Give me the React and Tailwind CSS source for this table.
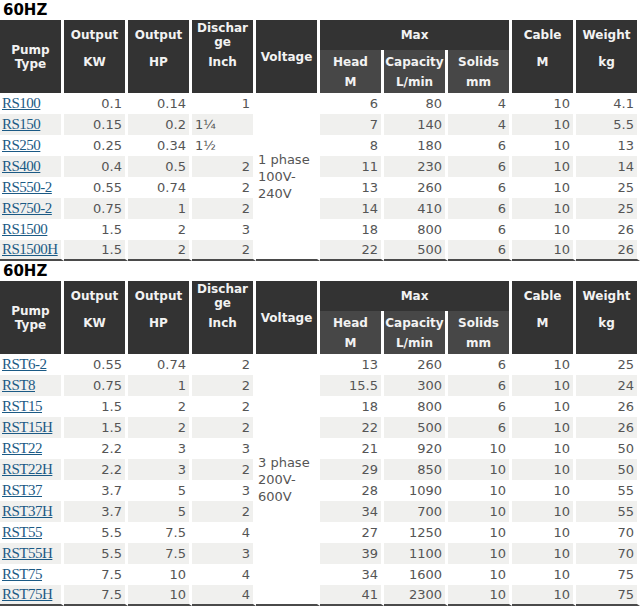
import React from 'react';

const rsRows = [
  ['RS100', '0.1', '0.14', '1', '6', '80', '4', '10', '4.1'],
  ['RS150', '0.15', '0.2', '1¼', '7', '140', '4', '10', '5.5'],
  ['RS250', '0.25', '0.34', '1½', '8', '180', '6', '10', '13'],
  ['RS400', '0.4', '0.5', '2', '11', '230', '6', '10', '14'],
  ['RS550-2', '0.55', '0.74', '2', '13', '260', '6', '10', '25'],
  ['RS750-2', '0.75', '1', '2', '14', '410', '6', '10', '25'],
  ['RS1500', '1.5', '2', '3', '18', '800', '6', '10', '26'],
  ['RS1500H', '1.5', '2', '2', '22', '500', '6', '10', '26'],
];

const rstRows = [
  ['RST6-2', '0.55', '0.74', '2', '13', '260', '6', '10', '25'],
  ['RST8', '0.75', '1', '2', '15.5', '300', '6', '10', '24'],
  ['RST15', '1.5', '2', '2', '18', '800', '6', '10', '26'],
  ['RST15H', '1.5', '2', '2', '22', '500', '6', '10', '26'],
  ['RST22', '2.2', '3', '3', '21', '920', '10', '10', '50'],
  ['RST22H', '2.2', '3', '2', '29', '850', '10', '10', '50'],
  ['RST37', '3.7', '5', '3', '28', '1090', '10', '10', '55'],
  ['RST37H', '3.7', '5', '2', '34', '700', '10', '10', '55'],
  ['RST55', '5.5', '7.5', '4', '27', '1250', '10', '10', '70'],
  ['RST55H', '5.5', '7.5', '3', '39', '1100', '10', '10', '70'],
  ['RST75', '7.5', '10', '4', '34', '1600', '10', '10', '75'],
  ['RST75H', '7.5', '10', '4', '41', '2300', '10', '10', '75'],
];

const th1 = "bg-[#333] border-r-[3px] border-white text-center align-middle p-0 leading-[14px] font-bold";
const th2 = "bg-[#333] border-r-[3px] border-white text-center align-top p-0 pt-[2px] leading-[20px] font-bold";
const thSub = "bg-[#474747] border-r-[3px] border-white text-center align-top p-0 pt-[2px] leading-[20px] font-bold";

const Heading = () => (
  <h2 className="h-[20px] leading-[20px] pl-[3px] text-[15px] font-bold text-black">60HZ</h2>
);

const PumpTable = ({ rows, voltage }) => (
  <table className="border-separate border-spacing-0 table-fixed w-[640px] text-[13px] text-[#555]">
    <colgroup>
      {Array.from({ length: 10 }).map((_, i) => (
        <col key={i} className="w-[64px]" />
      ))}
    </colgroup>
    <thead className="text-[12px] text-[#f2f2f2]">
      <tr className="h-[30px]">
        <th rowSpan={2} className={th1}>Pump<br />Type</th>
        <th className={th1}>Output</th>
        <th className={th1}>Output</th>
        <th className={th1}>Dischar<br />ge</th>
        <th rowSpan={2} className={th1}>Voltage</th>
        <th colSpan={3} className={th1}>Max</th>
        <th className={th1}>Cable</th>
        <th className={th1}>Weight</th>
      </tr>
      <tr className="h-[43px]">
        <th className={th2}>KW</th>
        <th className={th2}>HP</th>
        <th className={th2}>Inch</th>
        <th className={thSub}>Head<br />M</th>
        <th className={thSub}>Capacity<br />L/min</th>
        <th className={thSub}>Solids<br />mm</th>
        <th className={th2}>M</th>
        <th className={th2}>kg</th>
      </tr>
    </thead>
    <tbody>
      {rows.map((r, i) => {
        const last = i === rows.length - 1;
        const bg = i % 2 === 1 ? 'bg-[#f0f0ee]' : 'bg-white';
        const edge = last ? 'border-b-2 border-b-[#4a4a4a]' : '';
        return (
          <tr key={r[0]} className={last ? 'h-[19px]' : 'h-[21px]'}>
            <td className={`${bg} ${edge} border-r-[3px] border-r-white p-0 pl-[2px] leading-[19px] text-left`}>
              <a href="#" className="font-['Liberation_Serif',serif] text-[15px] tracking-[-0.5px] text-[#1b5a85] underline">
                {r[0]}
              </a>
            </td>
            {r.slice(1, 4).map((v, j) => {
              const frac = v.includes('¼') || v.includes('½');
              return (
                <td
                  key={j}
                  className={`${bg} ${edge} border-r-[3px] border-r-white p-0 leading-[19px] ${frac ? 'text-left pl-[3px]' : 'text-right pr-[3px]'}`}
                >
                  {v}
                </td>
              );
            })}
            {i === 0 && (
              <td
                rowSpan={rows.length}
                className="bg-white border-r-[3px] border-r-white border-b-2 border-b-[#4a4a4a] p-0 pl-[2px] align-middle text-left leading-[17px]"
              >
                {voltage[0]}<br />{voltage[1]}<br />{voltage[2]}
              </td>
            )}
            {r.slice(4).map((v, j) => (
              <td key={j} className={`${bg} ${edge} border-r-[3px] border-r-white p-0 pr-[3px] leading-[19px] text-right`}>
                {v}
              </td>
            ))}
          </tr>
        );
      })}
    </tbody>
  </table>
);

export default function App() {
  return (
    <div className="w-[641px] bg-white font-['DejaVu_Sans',sans-serif]">
      <Heading />
      <PumpTable rows={rsRows} voltage={['1 phase', '100V-', '240V']} />
      <Heading />
      <PumpTable rows={rstRows} voltage={['3 phase', '200V-', '600V']} />
    </div>
  );
}
